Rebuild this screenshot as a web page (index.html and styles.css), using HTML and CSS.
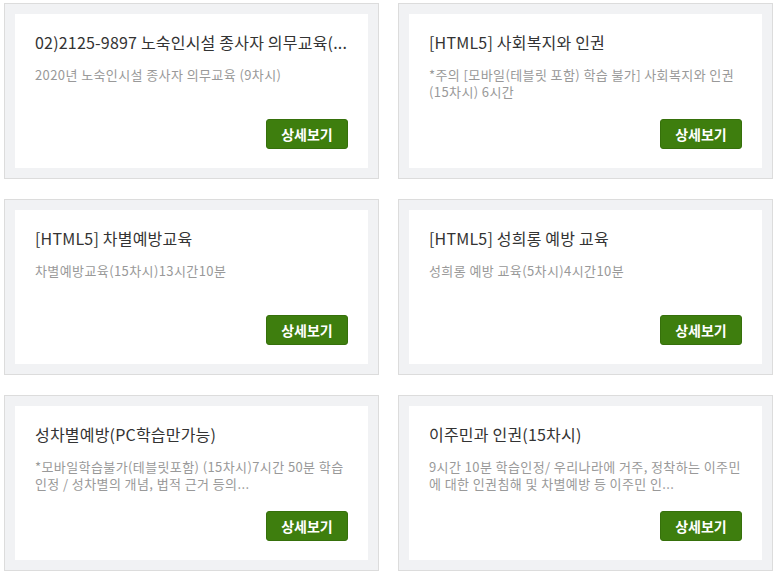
FILE: index.html
```html
<!DOCTYPE html>
<html>
<head>
	<meta charset="utf-8">
	<title>교육과정</title>
	<link rel="stylesheet" href="styles.css">
</head>
<body>

	<div class="course-list">

		<div class="course">
			<div class="course-inner">
				<h3 class="course-title">02)2125-9897 노숙인시설 종사자 의무교육(...</h3>
				<p class="course-desc">2020년 노숙인시설 종사자 의무교육 (9차시)</p>
				<a href="#" class="btn-detail">상세보기</a>
			</div>
		</div>

		<div class="course">
			<div class="course-inner">
				<h3 class="course-title">[HTML5] 사회복지와 인권</h3>
				<p class="course-desc">*주의 [모바일(테블릿 포함) 학습 불가] 사회복지와 인권 (15차시) 6시간</p>
				<a href="#" class="btn-detail">상세보기</a>
			</div>
		</div>

		<div class="course">
			<div class="course-inner">
				<h3 class="course-title">[HTML5] 차별예방교육</h3>
				<p class="course-desc">차별예방교육(15차시)13시간10분</p>
				<a href="#" class="btn-detail">상세보기</a>
			</div>
		</div>

		<div class="course">
			<div class="course-inner">
				<h3 class="course-title">[HTML5] 성희롱 예방 교육</h3>
				<p class="course-desc">성희롱 예방 교육(5차시)4시간10분</p>
				<a href="#" class="btn-detail">상세보기</a>
			</div>
		</div>

		<div class="course">
			<div class="course-inner">
				<h3 class="course-title">성차별예방(PC학습만가능)</h3>
				<p class="course-desc">*모바일학습불가(테블릿포함) (15차시)7시간 50분 학습 인정 / 성차별의 개념, 법적 근거 등의...</p>
				<a href="#" class="btn-detail">상세보기</a>
			</div>
		</div>

		<div class="course">
			<div class="course-inner">
				<h3 class="course-title">이주민과 인권(15차시)</h3>
				<p class="course-desc">9시간 10분 학습인정/ 우리나라에 거주, 정착하는 이주민에 대한 인권침해 및 차별예방 등 이주민 인...</p>
				<a href="#" class="btn-detail">상세보기</a>
			</div>
		</div>

	</div>

</body>
</html>
```

FILE: styles.css
```css
html {
	background: #fff;
}

body {
	margin: 0;
	font-family: "Noto Sans CJK KR", "Noto Sans", sans-serif;
	color: #333;
}

.course-list {
	display: grid;
	grid-template-columns: 375px 375px;
	column-gap: 19px;
	row-gap: 20px;
	padding: 3px 4px;
}

.course {
	background: #f1f2f4;
	border: 1px solid #dcdcdc;
	padding: 10px;
}

.course-inner {
	display: flex;
	flex-direction: column;
	height: 154px;
	box-sizing: border-box;
	padding: 16px 20px 19px;
	background: #fff;
}

.course-title {
	margin: 0;
	font-size: 16px;
	font-weight: normal;
	line-height: 24px;
	letter-spacing: 0.2px;
	color: #333;
	white-space: nowrap;
	overflow: hidden;
}

.course-desc {
	margin: 12px 0 0;
	font-size: 13px;
	line-height: 17px;
	letter-spacing: 0.4px;
	color: #999;
	max-height: 34px;
	overflow: hidden;
}

.btn-detail {
	margin-top: auto;
	align-self: flex-end;
	width: 82px;
	height: 30px;
	box-sizing: border-box;
	line-height: 28px;
	text-align: center;
	font-size: 14px;
	font-weight: bold;
	color: #fff;
	text-decoration: none;
	background: #3e7e0e;
	border: 1px solid #36700b;
	border-radius: 3px;
}
```
